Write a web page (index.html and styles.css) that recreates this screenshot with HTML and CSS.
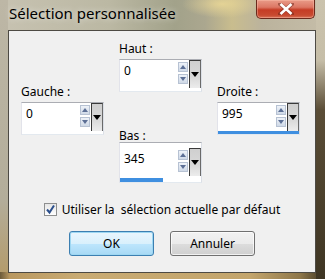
FILE: index.html
```html
<!DOCTYPE html>
<html lang="fr">
<head>
    <meta charset="UTF-8">
    <title>Sélection personnalisée</title>
    <link rel="stylesheet" href="styles.css">
</head>
<body>
    <div class="window">
        <div class="titlebar">
            <span class="title">Sélection personnalisée</span>
            <button class="close" aria-label="Fermer">
                <svg width="16" height="12" viewBox="0 0 16 12">
                    <path d="M2 1 L14 11 M14 1 L2 11" stroke="#6a2418" stroke-width="4" stroke-linecap="round" opacity="0.5"/>
                    <path d="M2.5 1 L13.5 11 M13.5 1 L2.5 11" stroke="#fff" stroke-width="2.6"/>
                </svg>
            </button>
        </div>
        <div class="client">
            <div class="fields">
                <div class="col side">
                    <div class="field">
                        <div class="label">Gauche :</div>
                        <div class="spin">
                            <div class="spin-row">
                                <span class="value">0</span>
                                <span class="arrows"><span class="arrow up"></span><span class="arrow down"></span></span>
                                <span class="drop"></span>
                            </div>
                        </div>
                    </div>
                </div>
                <div class="col center">
                    <div class="field">
                        <div class="label">Haut :</div>
                        <div class="spin">
                            <div class="spin-row">
                                <span class="value">0</span>
                                <span class="arrows"><span class="arrow up"></span><span class="arrow down"></span></span>
                                <span class="drop"></span>
                            </div>
                        </div>
                    </div>
                    <div class="field bas">
                        <div class="label">Bas :</div>
                        <div class="spin tall">
                            <div class="spin-row">
                                <span class="value">345</span>
                                <span class="arrows"><span class="arrow up"></span><span class="arrow down"></span></span>
                                <span class="drop"></span>
                            </div>
                            <div class="bar" style="width: 43px"></div>
                        </div>
                    </div>
                </div>
                <div class="col side">
                    <div class="field">
                        <div class="label">Droite :</div>
                        <div class="spin">
                            <div class="spin-row">
                                <span class="value">995</span>
                                <span class="arrows"><span class="arrow up"></span><span class="arrow down"></span></span>
                                <span class="drop"></span>
                            </div>
                            <div class="bar" style="width: 100%"></div>
                        </div>
                    </div>
                </div>
            </div>
            <label class="check">
                <span class="checkbox">
                    <svg width="11" height="11" viewBox="0 0 11 11">
                        <path d="M2 5.5 L4.5 8.5 L9 1.5" fill="none" stroke="#2b4f8c" stroke-width="2"/>
                    </svg>
                </span>
                <span>Utiliser la&nbsp; sélection actuelle par défaut</span>
            </label>
            <div class="buttons">
                <button class="btn default">OK</button>
                <button class="btn">Annuler</button>
            </div>
        </div>
    </div>
</body>
</html>
```

FILE: styles.css
```css
body {
    margin: 0;
    width: 325px;
    height: 279px;
    overflow: hidden;
    font-family: "Noto Sans", "Open Sans", sans-serif;
    font-size: 12px;
    color: #000;
}
.window {
    height: 279px;
    display: flex;
    flex-direction: column;
    background:
        radial-gradient(ellipse 40px 14px at 222px 4px, rgba(232, 214, 150, 0.9), rgba(232, 214, 150, 0)),
        linear-gradient(#cbc3ad 0, #c6bea8 60px, #5a4d36 110px, #3e3523 279px) right top / 9px 279px no-repeat,
        linear-gradient(90deg, #6c5a3a 0, #b99860 10px, #c9ab73 80px, #c3a56c 250px, #8e774a 300px, #3e3523 325px) left bottom / 325px 7px no-repeat,
        linear-gradient(#bdb7a6 0, #b3ad9a 200px, #b49a68 279px) left top / 8px 279px no-repeat,
        linear-gradient(90deg, #c7c2b1 0, #bbb8a3 110px, #a2a28a 175px, #aba78f 205px, #c9bd8e 232px, #bbb39d 262px, #c5bda8 325px);
}
.titlebar {
    height: 30px;
    display: flex;
    justify-content: space-between;
    align-items: flex-start;
    padding: 0 10px 0 9px;
}
.title {
    margin-top: 4px;
    font-size: 15px;
    line-height: 18px;
    text-shadow: 0 0 6px rgba(255, 255, 255, 0.7);
}
.close {
    width: 59px;
    height: 19px;
    padding: 0;
    display: flex;
    align-items: center;
    justify-content: center;
    border: 1px solid #6b2a1c;
    border-top: none;
    border-radius: 0 0 5px 5px;
    background: linear-gradient(#e99b88 0, #dc7764 40%, #c53c25 55%, #c84a30 85%, #d8745a 100%);
    box-shadow: inset 0 0 0 1px rgba(255, 200, 180, 0.4);
}
.client {
    flex: 1;
    margin: 0 9px 6px 8px;
    border: 1px solid #4d4a44;
    background: #f0f0f0;
}
.fields {
    display: flex;
    gap: 15px;
    padding: 11px 0 0 12px;
}
.col {
    width: 83px;
}
.side {
    padding-top: 43px;
}
.label {
    line-height: 14px;
    height: 14px;
    margin-bottom: 3px;
}
.bas {
    margin-top: 37px;
}
.bas .label {
    margin-bottom: -1px;
}
.spin {
    height: 33px;
    box-sizing: border-box;
    border: 1px solid #abadb3;
    border-color: #abadb3 #dbdfe6 #e3e9ef #e2e3ea;
    background: #fff;
    display: flex;
    flex-direction: column;
}
.spin.tall {
    height: 41px;
}
.spin-row {
    display: flex;
    align-items: flex-start;
}
.tall .spin-row {
    margin-top: 5px;
}
.value {
    flex: 1;
    padding: 4px 0 0 4px;
    line-height: 14px;
}
.arrows {
    width: 10px;
    margin: 2px 1px 0 0;
    display: flex;
    flex-direction: column;
    gap: 2px;
}
.arrow {
    height: 10px;
    box-sizing: border-box;
    border: 1px solid #b7c2d3;
    background: linear-gradient(#eef2f8, #cfd9e7);
    position: relative;
}
.arrow::after {
    content: "";
    position: absolute;
    left: 1px;
    top: 2px;
    border-left: 3px solid transparent;
    border-right: 3px solid transparent;
}
.up::after {
    border-bottom: 4px solid #5c6f95;
}
.down::after {
    border-top: 4px solid #5c6f95;
}
.drop {
    width: 12px;
    height: 28px;
    box-sizing: border-box;
    border-left: 1px solid #3a3a3a;
    border-top: 1px solid #3a3a3a;
    border-right: 1px solid #6a6a6a;
    background: linear-gradient(#cfcfcf, #d9d9d9 60%, #ececec);
    position: relative;
}
.drop::after {
    content: "";
    position: absolute;
    left: 1px;
    top: 11px;
    border-left: 4px solid transparent;
    border-right: 4px solid transparent;
    border-top: 5px solid #000;
}
.bar {
    margin-top: auto;
    height: 4px;
    background: #3f8fe0;
}
.check {
    display: flex;
    justify-content: center;
    align-items: center;
    gap: 5px;
    margin-top: 19px;
    height: 15px;
}
.checkbox {
    width: 13px;
    height: 13px;
    box-sizing: border-box;
    border: 1px solid #8e8f8f;
    background: linear-gradient(#e6e6e6, #fff);
    display: flex;
    align-items: center;
    justify-content: center;
}
.buttons {
    display: flex;
    justify-content: center;
    gap: 16px;
    margin-top: 14px;
}
.btn {
    width: 85px;
    height: 25px;
    font: inherit;
    color: #000;
    border: 1px solid #707070;
    border-radius: 3px;
    background: linear-gradient(#f2f2f2 0, #ebebeb 50%, #dddddd 50%, #cfcfcf 100%);
    box-shadow: inset 0 0 0 1px rgba(255, 255, 255, 0.7);
}
.btn.default {
    border-color: #3c7fb1;
    background: linear-gradient(#eaf6fd 0, #d9f0fc 50%, #bee6fd 50%, #a7d9f5 100%);
    box-shadow: inset 0 0 0 1px #9ed7f2;
}
```
